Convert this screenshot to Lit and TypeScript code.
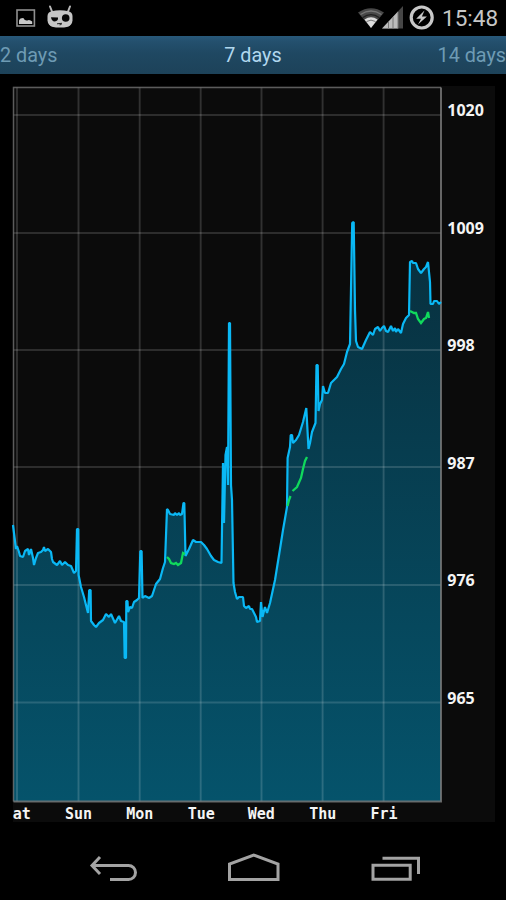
import { LitElement, html, svg, css } from "lit";
import { customElement } from "lit/decorators.js";

const PLOT = { left: 13.5, top: 87.5, right: 441, bottom: 801.5 };

const DAYS = [
  { label: "at", line: 17, x: 12.7 },
  { label: "Sun", line: 78.5, x: 65 },
  { label: "Mon", line: 139.7, x: 126.3 },
  { label: "Tue", line: 200.7, x: 187.7 },
  { label: "Wed", line: 261.5, x: 247.7 },
  { label: "Thu", line: 322.6, x: 309.3 },
  { label: "Fri", line: 383.6, x: 370.5 },
];

const LEVELS = [
  { label: "1020", y: 115, text: 116 },
  { label: "1009", y: 233, text: 233.5 },
  { label: "998", y: 350, text: 351 },
  { label: "987", y: 467, text: 468.5 },
  { label: "976", y: 585, text: 586 },
  { label: "965", y: 702.5, text: 703.5 },
];

const PRESSURE =
  "13,525 15,541 16,549 17,546 19,552 20,556 23,557 25,551 28,549 29,555 31,549 33,558 34,565 36,558 38,553 41,552 43,550 44,547 45,551 48,549 51,552 52,559 53,562 57,565 60,561 62,565 65,562 68,565 71,566 74,573 76,571 77,529 78.3,529 78.6,575 81,587 84,597 88,613 89.2,590 90.6,590 91,621 94,625 96,627 99,623 103,620 106,614 109,617 111,614 115,623 119,616 121,621 124,622 124.700,658 126,658 126.300,601 127.500,601 128,612 130,607 132,608 134,602 137,600 139,598 140.300,551 141.600,551 142.500,598 145,596 149,598 152,596 156,584 160,579 163,568 165,562 167,509 168,510 170,514 174,515 175,513 177,515 179,513 180,515 182,514 183.500,503 184.300,503 185.500,556 189,549 193,540 196,542 201,542 204,545 207,549 211,556 214,560 218,562 221.500,563 223,463 224,523 225.500,455 227,447 228,485 229,323 230,323 231,485 232,500 233.500,583 235,592 237,599 239,597 243,597 244,606 246,608 249,606 250,609 252,609 256,617 257,622 260,621 261,602 262.500,617 265,607 267,613 270,603 275,580 280,549 283,530 287,507 287.600,458 290,447 290.700,435 292,435 293,443 296,440 299,435 303,422 306.300,408 308.500,449 310,443 312,432 315.500,423 316.500,365 317.700,365 318.500,411 320,404 322,400 323,386 325,393 328,393 331,383 334,380 337,377 341,369 344,364 347,352 350,344 352.200,223 353.700,222 355,310 356,341 358,347 362,349 366,340 370,332 373,335 375,329 378,327 380,331 382,328 384,326 386,331 388,332 391,326 393,331 395,328 396,332 398,329 401,333 403,324 406,318 409,315 410,262 412,261 413,263 416,263 418,269 421,273 424,269 426,267 428,262 430,282 430.500,304 433,304 434,301 437,301 439,304 441,302";

const FORECASTS = [
  "167,557 169,559 171,563 174,564 176,563 178,565 181,563 183,553 185,554",
  "287.5,506 289,500 290.5,496",
  "292.5,491 297,487 301,478 303,469 305,461 307,457",
  "410,311 414,313 416,313 418,319 421,323 424,319 426,318 428,312 429,318",
];

@customElement("app-root")
export class AppRoot extends LitElement {
  static styles = css`
    :host {
      display: flex;
      flex-direction: column;
      width: 506px;
      height: 900px;
      overflow: hidden;
      background: #000;
      font-family: Roboto, "Noto Sans", sans-serif;
    }
    .status {
      display: flex;
      justify-content: space-between;
      height: 36px;
      color: #c6c6c6;
    }
    .status svg,
    .chart,
    .nav svg {
      display: block;
      flex: none;
    }
    .right {
      display: flex;
    }
    .clock {
      width: 64px;
      font-size: 22.5px;
      line-height: 37px;
      white-space: nowrap;
    }
    .tabs {
      display: flex;
      justify-content: space-between;
      height: 38px;
      box-sizing: border-box;
      background: linear-gradient(#28597a 0, #24506e 14%, #1f4862 45%, #1d4259 100%);
      color: #6e9bb4;
      font-size: 19.8px;
      line-height: 40px;
      white-space: nowrap;
    }
    .tabs span {
      flex: 1;
    }
    .tabs .current {
      color: #b0d7ee;
      text-align: center;
    }
    .tabs .next {
      text-align: right;
    }
    .chart {
      margin-top: 12px;
    }
    .level {
      font: bold 16px "Noto Sans", "Open Sans", sans-serif;
      fill: #f4f4f4;
    }
    .day {
      font: bold 15px "DejaVu Sans Mono", monospace;
      fill: #f4f4f4;
    }
    .nav {
      display: flex;
      height: 78px;
    }
  `;

  private statusIcons() {
    return html`<svg width="90" height="36" viewBox="0 0 90 36">
      <rect x="17" y="10" width="17.4" height="16" fill="none" stroke="#8f8f8f" stroke-width="1.6" />
      <path d="M19 24v-3.600q1-2.600 3-2.100q1.500-.8 2.300 1.200q2 1.500 3.700.7q2.200-.5 4.200 1.400V24z" fill="#c8c8c8" />
      <path d="M50 6.500l2 5M70 6.500l-2 5" stroke="#b8b8b8" stroke-width="2" stroke-linecap="round" />
      <path d="M47.500 16q0-3.500 4-4.800q8.500-2 17 0q4 1.300 4 4.800v4.500q-.5 4.500-4.500 6.200q-8 1.800-16 0q-4-1.700-4.500-6.200z" fill="#c6c6c6" />
      <circle cx="65.700" cy="18" r="3.800" fill="#080808" />
      <path d="M51 17.200l7 .4q.4 3.700-3.200 3.900q-3.300-.2-3.800-4.300z" fill="#080808" />
      <path d="M57 23.800l5-.5M59.500 24.800l2-.3" stroke="#222" />
    </svg>`;
  }

  private signalIcons() {
    return html`<svg width="85" height="36" viewBox="357 0 85 36">
      <path d="M358 12.600Q371 3.800 384 12.600L371 28z" fill="#484848" />
      <path d="M360.500 14.500Q371 7.500 381.500 14.500" fill="none" stroke="#777" stroke-width="1.300" />
      <path d="M362.500 17.800Q371 11.500 379.500 17.800" fill="none" stroke="#202020" stroke-width="1.300" />
      <path d="M364.500 19.600Q371 14.800 377.500 19.600L371 28z" fill="#ddd" />
      <path d="M366.500 21.500Q371 18.800 375.500 21.500" fill="none" stroke="#777" />
      <path d="M382 28.500L403 6v22.500z" fill="#464646" />
      <path d="M382 28.500L398 11.500v17z" fill="#bcbcbc" />
      <path d="M388.500 22v6.500M393 17v11.500M398 12v16.500" stroke="#777" />
      <circle cx="421.700" cy="17.500" r="10.500" fill="none" stroke="#c8c8c8" stroke-width="3.200" />
      <path d="M424.500 10.500l-8.300 8.300h4.800l-3 5.700 8.900-8h-5z" fill="#c8c8c8" />
    </svg>`;
  }

  private chart() {
    const { left, top, right, bottom } = PLOT;
    return html`<svg class="chart" width="506" height="736" viewBox="0 86 506 736">
      <defs>
        <linearGradient id="fill" gradientUnits="userSpaceOnUse" x1="0" y1=${top} x2="0" y2=${bottom}>
          <stop offset="0" stop-color="#092632" />
          <stop offset="1" stop-color="#05536b" />
        </linearGradient>
      </defs>
      <rect x="13" y="86" width="482" height="736" fill="#0b0b0b" />
      <polygon points="${left},${bottom} ${PRESSURE} ${right},${bottom}" fill="url(#fill)" />
      ${DAYS.map(
        (d) => svg`<path d="M${d.line} ${top}V${bottom}" stroke="#fff" stroke-opacity=".155" stroke-width="1.900" />
          <text class="day" x=${d.x} y="819">${d.label}</text>`,
      )}
      ${LEVELS.map(
        (l) => svg`<path d="M${left} ${l.y}H${right}" stroke="#fff" stroke-opacity=".14" stroke-width="1.800" />
          <text class="level" x="447.3" y=${l.text}>${l.label}</text>`,
      )}
      <path d="M${left} ${bottom}V${top}H${right}" fill="none" stroke="#777" stroke-opacity=".75" stroke-width="1.500" />
      <path d="M${right} ${top}V${bottom}H${left}" fill="none" stroke="#7d7d7d" stroke-opacity=".8" stroke-width="2" />
      <polyline points=${PRESSURE} fill="none" stroke="#0ab8f5" stroke-width="2.200" stroke-linejoin="bevel" />
      ${FORECASTS.map((p) => svg`<polyline points=${p} fill="none" stroke="#10d95c" stroke-width="2.300" />`)}
    </svg>`;
  }

  private navigation() {
    return html`<svg width="506" height="78" viewBox="0 822 506 78" fill="none" stroke="#a3a3a3" stroke-width="3">
      <path d="M100 857l-8 8.500 8 8.500M92 865.500H128.500a7 7 0 0 1 0 14H110" />
      <path d="M229.500 879.500V864L253.700 855L278 864V879.500z" />
      <path d="M373 865.200H410.200V879.300H373zM382.500 858.300H418.500V874" />
    </svg>`;
  }

  render() {
    return html`
      <div class="status">
        ${this.statusIcons()}
        <div class="right">${this.signalIcons()}<span class="clock">15:48</span></div>
      </div>
      <div class="tabs">
        <span>2 days</span><span class="current">7 days</span><span class="next">14 days</span>
      </div>
      ${this.chart()}
      <div class="nav">${this.navigation()}</div>
    `;
  }
}
